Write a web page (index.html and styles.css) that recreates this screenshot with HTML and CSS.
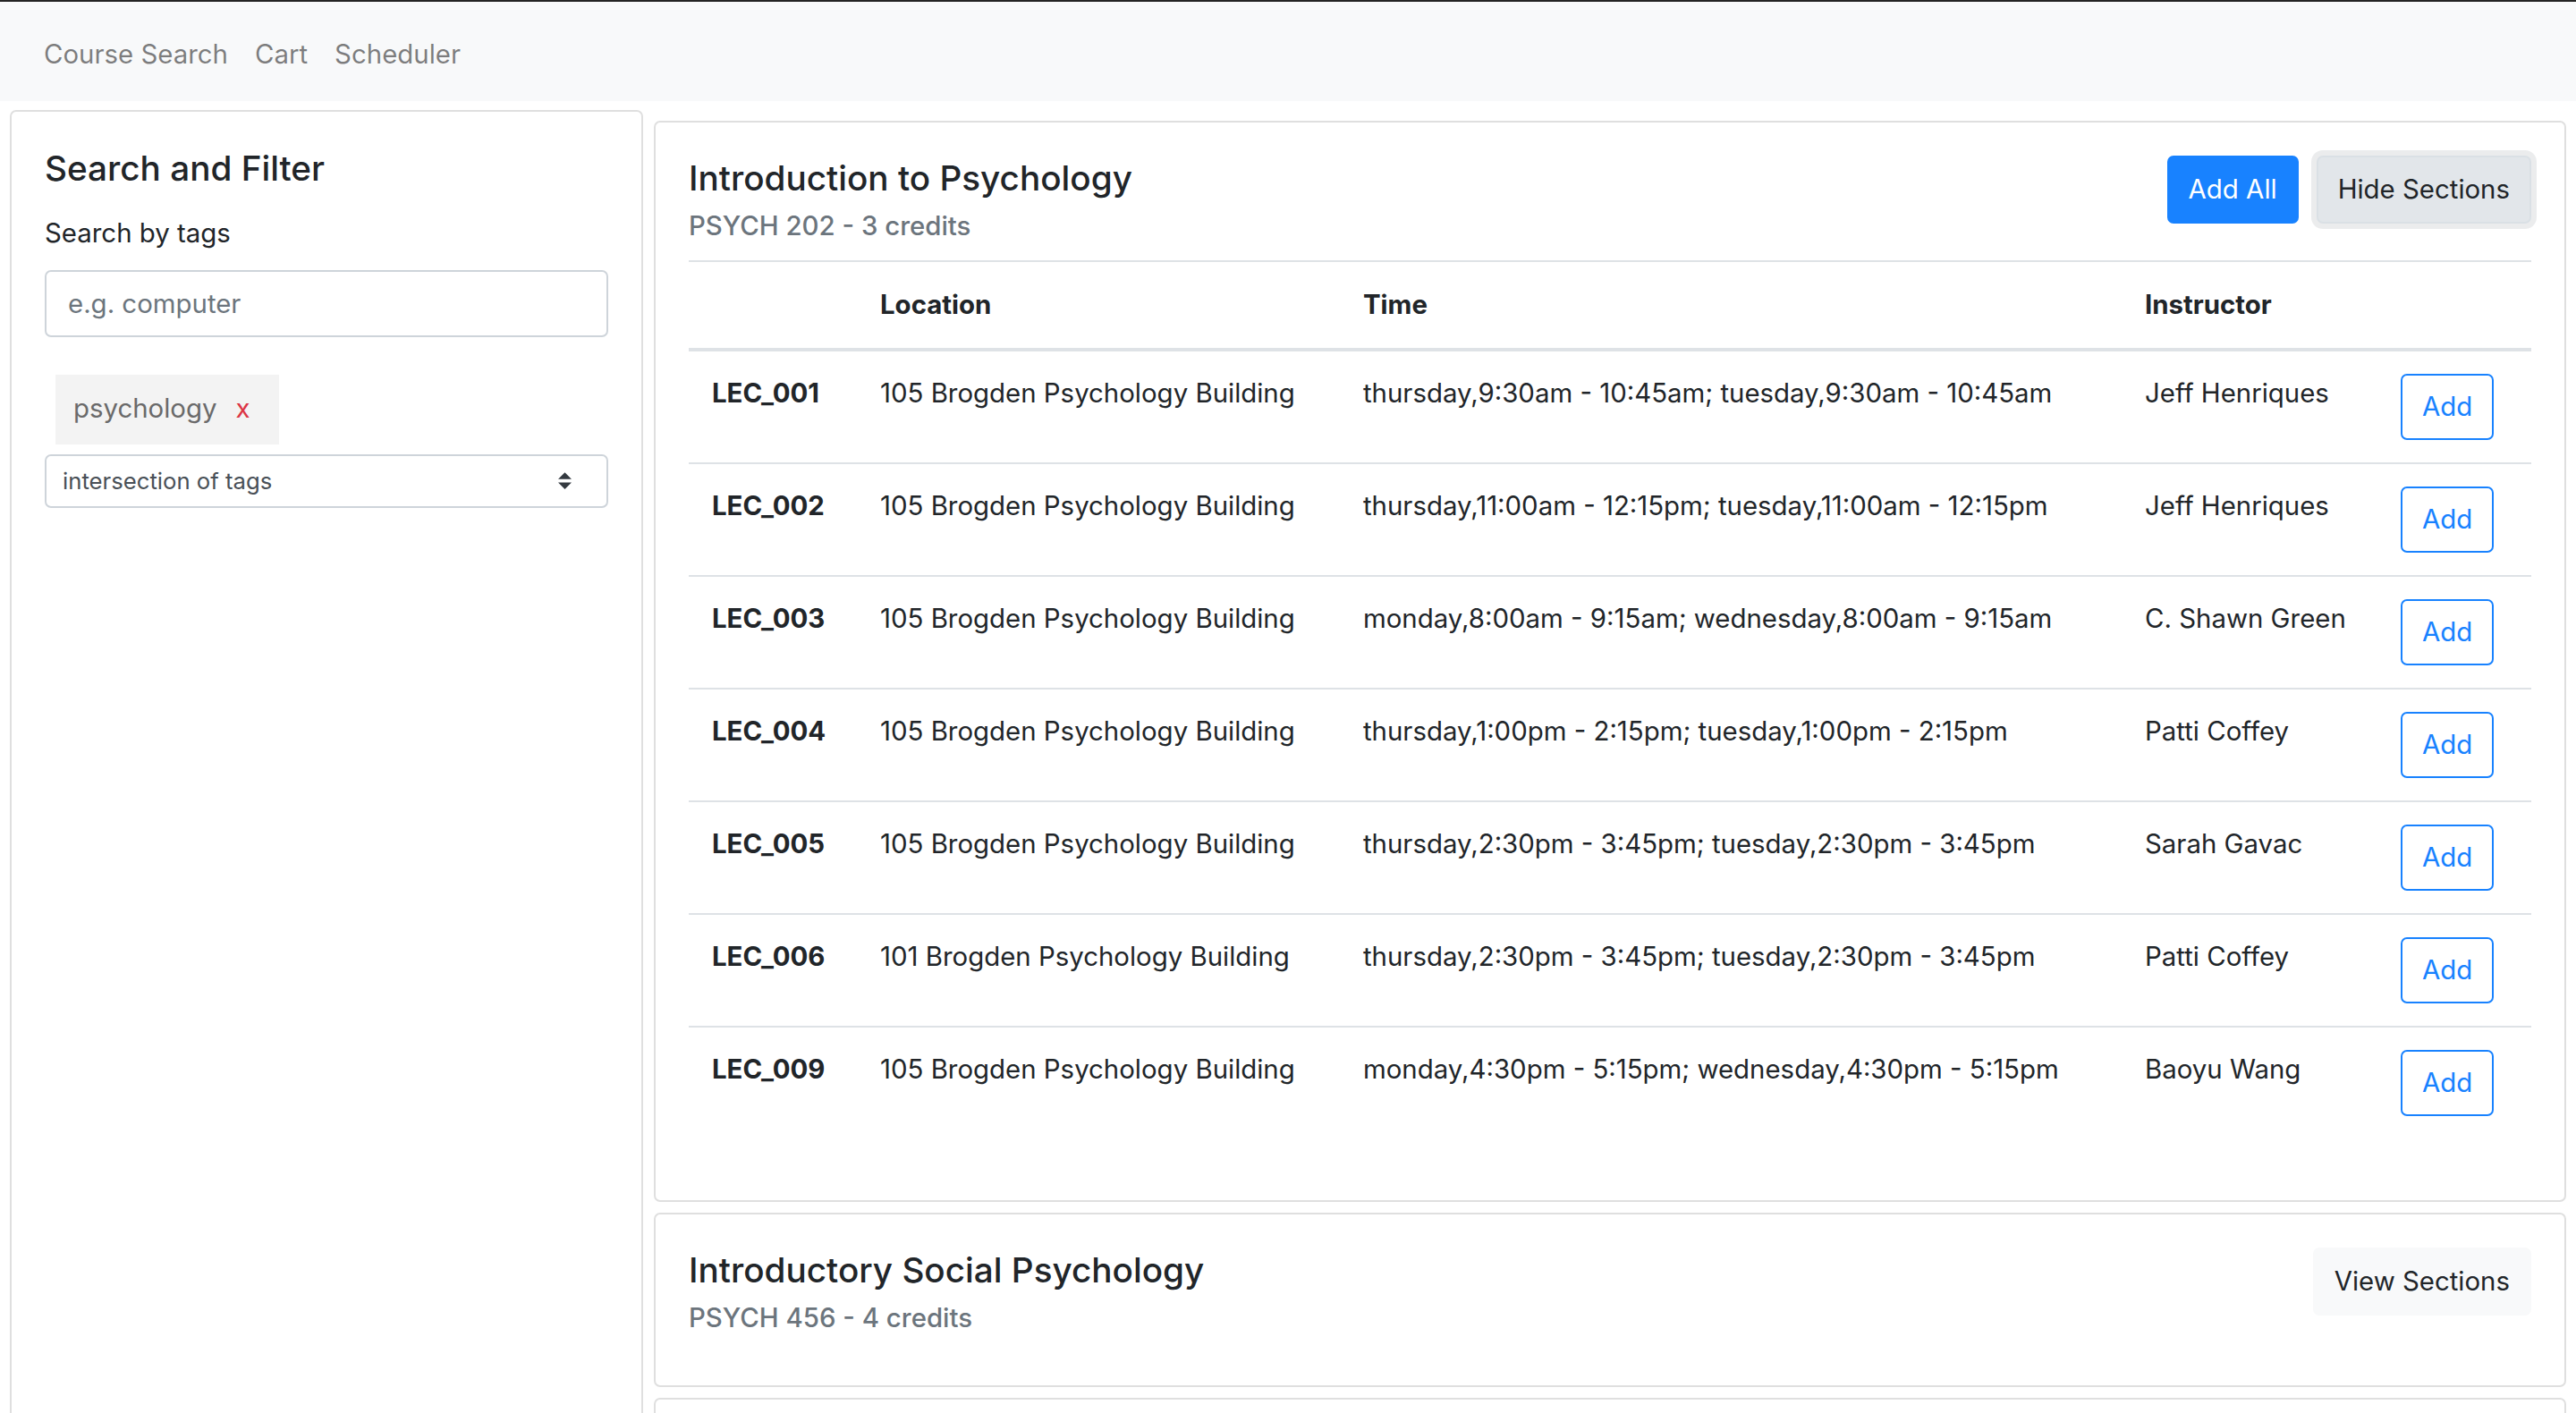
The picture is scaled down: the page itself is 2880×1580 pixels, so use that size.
FILE: index.html
```html
<!DOCTYPE html>
<html lang="en">
<head>
<meta charset="utf-8">
<title>Course Search</title>
<link rel="stylesheet" href="styles.css">
</head>
<body>
<nav class="navbar">
  <a class="nav-link" href="#">Course Search</a>
  <a class="nav-link" href="#">Cart</a>
  <a class="nav-link" href="#">Scheduler</a>
</nav>
<main class="layout">
  <aside class="card filter-card">
    <div class="card-body">
      <h5 class="card-title filter-title">Search and Filter</h5>
      <label class="field-label" for="tags">Search by tags</label>
      <input class="form-control" id="tags" type="text" placeholder="e.g. computer">
      <div class="tag-list">
        <span class="tag">psychology<span class="tag-remove">x</span></span>
      </div>
      <select class="custom-select">
        <option>intersection of tags</option>
        <option>union of tags</option>
      </select>
    </div>
  </aside>
  <section class="results">
    <article class="card course">
      <div class="card-body">
        <div class="course-head">
          <div class="course-info">
            <h5 class="card-title">Introduction to Psychology</h5>
            <h6 class="card-subtitle">PSYCH 202 - 3 credits</h6>
          </div>
          <div class="course-actions">
            <button class="btn btn-primary" type="button">Add All</button>
            <button class="btn btn-light is-focused" type="button">Hide Sections</button>
          </div>
        </div>
        <table class="sections">
          <colgroup>
            <col class="c-name"><col class="c-loc"><col class="c-time"><col class="c-inst"><col class="c-act">
          </colgroup>
          <thead>
            <tr><th></th><th>Location</th><th>Time</th><th>Instructor</th><th></th></tr>
          </thead>
          <tbody>
            <tr><th>LEC_001</th><td>105 Brogden Psychology Building</td><td>thursday,9:30am - 10:45am; tuesday,9:30am - 10:45am</td><td>Jeff Henriques</td><td><button class="btn btn-outline" type="button">Add</button></td></tr>
            <tr><th>LEC_002</th><td>105 Brogden Psychology Building</td><td>thursday,11:00am - 12:15pm; tuesday,11:00am - 12:15pm</td><td>Jeff Henriques</td><td><button class="btn btn-outline" type="button">Add</button></td></tr>
            <tr><th>LEC_003</th><td>105 Brogden Psychology Building</td><td>monday,8:00am - 9:15am; wednesday,8:00am - 9:15am</td><td>C. Shawn Green</td><td><button class="btn btn-outline" type="button">Add</button></td></tr>
            <tr><th>LEC_004</th><td>105 Brogden Psychology Building</td><td>thursday,1:00pm - 2:15pm; tuesday,1:00pm - 2:15pm</td><td>Patti Coffey</td><td><button class="btn btn-outline" type="button">Add</button></td></tr>
            <tr><th>LEC_005</th><td>105 Brogden Psychology Building</td><td>thursday,2:30pm - 3:45pm; tuesday,2:30pm - 3:45pm</td><td>Sarah Gavac</td><td><button class="btn btn-outline" type="button">Add</button></td></tr>
            <tr><th>LEC_006</th><td>101 Brogden Psychology Building</td><td>thursday,2:30pm - 3:45pm; tuesday,2:30pm - 3:45pm</td><td>Patti Coffey</td><td><button class="btn btn-outline" type="button">Add</button></td></tr>
            <tr><th>LEC_009</th><td>105 Brogden Psychology Building</td><td>monday,4:30pm - 5:15pm; wednesday,4:30pm - 5:15pm</td><td>Baoyu Wang</td><td><button class="btn btn-outline" type="button">Add</button></td></tr>
          </tbody>
        </table>
      </div>
    </article>
    <article class="card course">
      <div class="card-body">
        <div class="course-head">
          <div class="course-info">
            <h5 class="card-title">Introductory Social Psychology</h5>
            <h6 class="card-subtitle">PSYCH 456 - 4 credits</h6>
          </div>
          <div class="course-actions">
            <button class="btn btn-light" type="button">View Sections</button>
          </div>
        </div>
      </div>
    </article>
    <article class="card course course-more">
      <div class="card-body"></div>
    </article>
  </section>
</main>
</body>
</html>
```

FILE: styles.css
```css
* {
  box-sizing: border-box;
}

html, body {
  margin: 0;
  padding: 0;
}

body {
  font-family: Inter, "Liberation Sans", Arial, sans-serif;
  font-size: 29.4px;
  line-height: 1.5;
  color: #212529;
  background: #fff;
  border-top: 2px solid #242424;
}

/* ---------- navbar ---------- */
.navbar {
  display: flex;
  align-items: center;
  height: 111px;
  padding: 7px 19px 0 34px;
  background: #f8f9fa;
}

.nav-link {
  padding: 0 15px;
  color: rgba(0, 0, 0, 0.5);
  text-decoration: none;
}

/* ---------- layout ---------- */
.layout {
  display: flex;
  align-items: stretch;
  gap: 12px;
  padding: 10px 11px 0;
}

.card {
  background: #fff;
  border: 2px solid #dfdfdf;
  border-radius: 7px;
}

.card-body {
  padding: 37px;
}

.filter-card {
  flex: 0 0 708px;
}

.results {
  flex: 1 1 auto;
  min-width: 0;
}

.course {
  margin-top: 12px;
}

.course-more {
  min-height: 160px;
}

/* ---------- typography ---------- */
.card-title {
  margin: 2px 0 0;
  font-size: 38.7px;
  font-weight: 500;
  line-height: 1.2;
}

.card-subtitle {
  margin: 13px 0 0;
  font-size: 29.4px;
  font-weight: 500;
  line-height: 1.2;
  color: #6c757d;
}

/* ---------- filter panel ---------- */
.filter-title {
  margin: 3px 0 28px;
}

.field-label {
  display: block;
  margin-bottom: 18px;
}

.form-control {
  display: block;
  width: 100%;
  height: 75px;
  padding: 0 24px;
  font: inherit;
  color: #495057;
  border: 2px solid #ced4da;
  border-radius: 7px;
  background: #fff;
}

.form-control::placeholder {
  color: #6c757d;
}

.tag-list {
  display: flex;
  margin: 42px 0 11px 12px;
}

.tag {
  display: inline-flex;
  align-items: center;
  height: 78px;
  padding: 0 32px 0 20px;
  background: #f3f3f3;
  color: #6a6a6a;
}

.tag-remove {
  margin-left: 21px;
  color: #dc3545;
}

.custom-select {
  display: block;
  width: 100%;
  height: 60px;
  padding: 0 60px 0 18px;
  font-family: inherit;
  font-size: 25.7px;
  color: #495057;
  border: 2px solid #ced4da;
  border-radius: 7px;
  appearance: none;
  -webkit-appearance: none;
  background: #fff url("data:image/svg+xml,%3csvg xmlns='http://www.w3.org/2000/svg' width='4' height='5' viewBox='0 0 4 5'%3e%3cpath fill='%23343a40' d='M2 0L0 2h4zm0 5L0 3h4z'/%3e%3c/svg%3e") no-repeat right 39px center / 15px 19px;
}

/* ---------- course cards ---------- */
.course-head {
  display: flex;
  justify-content: space-between;
  align-items: flex-start;
  margin-bottom: 20px;
}

.course-actions {
  display: flex;
  gap: 20px;
}

.btn {
  display: inline-block;
  padding: 14px 22px;
  font-family: inherit;
  font-size: 29.4px;
  line-height: 44px;
  border: 2px solid transparent;
  border-radius: 7px;
  cursor: pointer;
  white-space: nowrap;
}

.btn-primary {
  color: #fff;
  background: #1882ff;
  border-color: #1882ff;
}

.btn-light {
  color: #212529;
  background: #f8f9fa;
  border-color: #f8f9fa;
}

.btn-light.is-focused {
  background: #e2e6ea;
  border-color: #dae0e5;
  box-shadow: 0 0 0 6px rgba(216, 217, 219, 0.5);
}

.btn-outline {
  padding: 13px 22px;
  color: #1882ff;
  background: transparent;
  border-color: #1882ff;
}

/* ---------- sections table ---------- */
.sections {
  width: 100%;
  margin-bottom: 32px;
  border-collapse: collapse;
  table-layout: fixed;
}

.c-name { width: 188px; }
.c-loc { width: 540px; }
.c-time { width: 874px; }
.c-inst { width: 286px; }

.sections th,
.sections td {
  padding: 25px 26px;
  text-align: left;
  vertical-align: top;
  border-top: 2px solid #dee2e6;
  white-space: nowrap;
}

.sections th {
  font-weight: 700;
}

.sections thead th {
  padding: 26px;
  vertical-align: bottom;
  border-bottom: 4px solid #dee2e6;
}
```
